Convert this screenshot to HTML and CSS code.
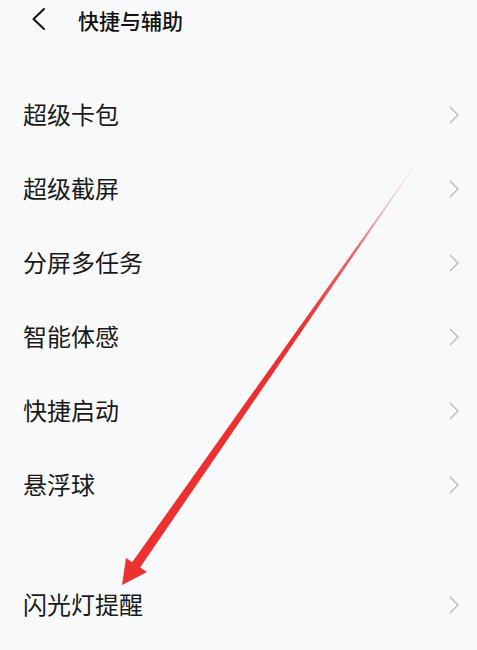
FILE: index.html
```html
<!DOCTYPE html>
<html lang="zh-CN">
<head>
<meta charset="utf-8">
<title>快捷与辅助</title>
<link rel="stylesheet" href="styles.css">
</head>
<body>
<div class="page">
  <header class="header">
    <svg class="back" width="16" height="26" viewBox="0 0 16 26"><path d="M13 3 L2.5 13 L13 23" fill="none" stroke="#111" stroke-width="2" stroke-linecap="round" stroke-linejoin="round"/></svg>
    <div class="title">快捷与辅助</div>
  </header>
  <ul class="list">
    <li class="row"><span class="label">超级卡包</span><svg class="chev" width="12" height="20" viewBox="0 0 12 20"><path d="M2 2 L10 10 L2 18" fill="none" stroke="#b9b9bd" stroke-width="1.3"/></svg></li>
    <li class="row"><span class="label">超级截屏</span><svg class="chev" width="12" height="20" viewBox="0 0 12 20"><path d="M2 2 L10 10 L2 18" fill="none" stroke="#b9b9bd" stroke-width="1.3"/></svg></li>
    <li class="row"><span class="label">分屏多任务</span><svg class="chev" width="12" height="20" viewBox="0 0 12 20"><path d="M2 2 L10 10 L2 18" fill="none" stroke="#b9b9bd" stroke-width="1.3"/></svg></li>
    <li class="row"><span class="label">智能体感</span><svg class="chev" width="12" height="20" viewBox="0 0 12 20"><path d="M2 2 L10 10 L2 18" fill="none" stroke="#b9b9bd" stroke-width="1.3"/></svg></li>
    <li class="row"><span class="label">快捷启动</span><svg class="chev" width="12" height="20" viewBox="0 0 12 20"><path d="M2 2 L10 10 L2 18" fill="none" stroke="#b9b9bd" stroke-width="1.3"/></svg></li>
    <li class="row"><span class="label">悬浮球</span><svg class="chev" width="12" height="20" viewBox="0 0 12 20"><path d="M2 2 L10 10 L2 18" fill="none" stroke="#b9b9bd" stroke-width="1.3"/></svg></li>
    <li class="row row-gap"><span class="label">闪光灯提醒</span><svg class="chev" width="12" height="20" viewBox="0 0 12 20"><path d="M2 2 L10 10 L2 18" fill="none" stroke="#b9b9bd" stroke-width="1.3"/></svg></li>
  </ul>
  <svg class="arrow" width="477" height="650" viewBox="0 0 477 650">
    <defs>
      <linearGradient id="fade" x1="414" y1="166" x2="300" y2="330" gradientUnits="userSpaceOnUse">
        <stop offset="0" stop-color="#e8c8cc" stop-opacity="0.3"/>
        <stop offset="0.5" stop-color="#e44a4a" stop-opacity="0.8"/>
        <stop offset="1" stop-color="#ec3030"/>
      </linearGradient>
    </defs>
    <polygon points="414,166 414.6,166.4 139.4,568.4 131.6,563" fill="url(#fade)"/>
    <polygon points="122,585 126,558 147,572" fill="#ee3030"/>
  </svg>
</div>
</body>
</html>
```
FILE: styles.css
```css
html, body {
  margin: 0;
  padding: 0;
  background: #f8f9fb;
}
.page {
  position: relative;
  width: 477px;
  height: 650px;
  overflow: hidden;
  font-family: "Noto Sans CJK SC", "Noto Sans", sans-serif;
  color: #1a1a1a;
}
.header {
  height: 40px;
  display: flex;
  align-items: center;
  padding-left: 31px;
}
.back {
  display: block;
  margin-top: -2px;
}
.title {
  margin-left: 31px;
  font-size: 21px;
  font-weight: 500;
  line-height: 40px;
  color: #111;
}
.list {
  list-style: none;
  margin: 0;
  padding: 38px 0 0 0;
}
.row {
  height: 74px;
  display: flex;
  align-items: center;
  justify-content: space-between;
  padding: 0 17px 0 23px;
}
.row-gap {
  margin-top: 46px;
}
.label {
  font-size: 24px;
  line-height: 30px;
  margin-top: -2px;
}
.chev {
  display: block;
}
.arrow {
  position: absolute;
  left: 0;
  top: 0;
  pointer-events: none;
}
```
